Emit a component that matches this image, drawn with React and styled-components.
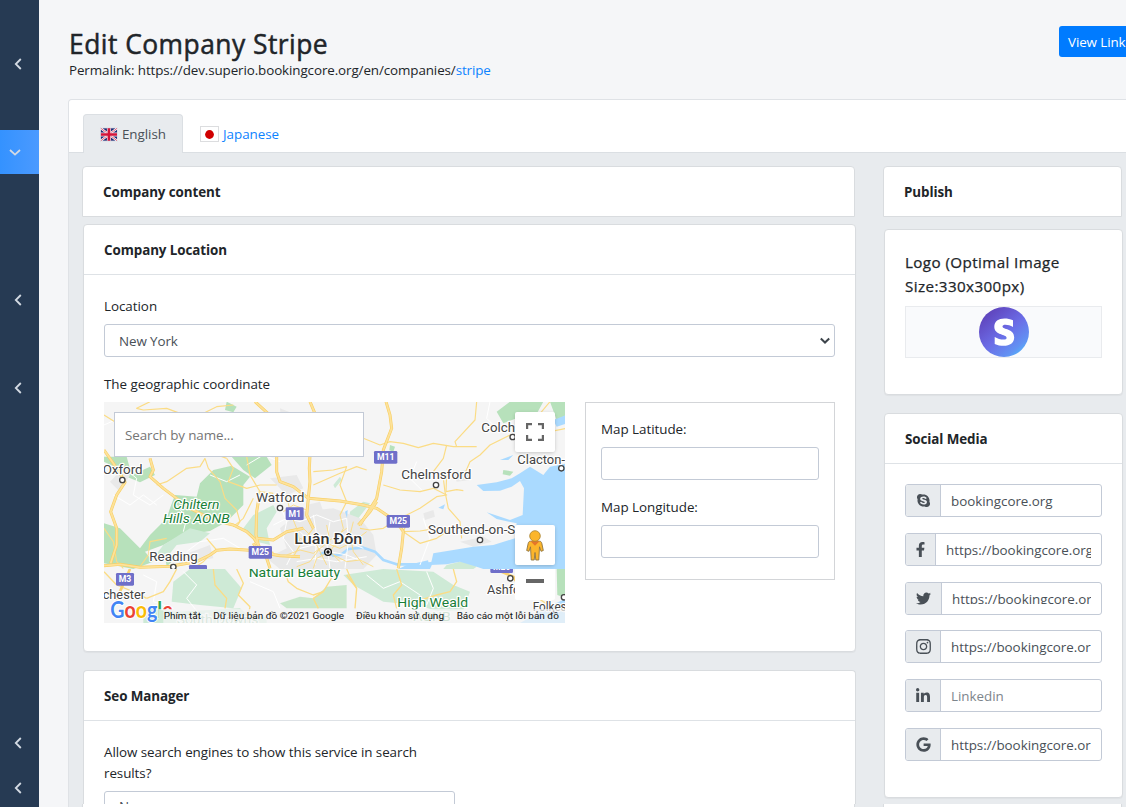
import React from "react";
import styled, { createGlobalStyle, css } from "styled-components";
import { FaSkype, FaFacebookF, FaTwitter, FaInstagram, FaLinkedinIn, FaGoogle } from "react-icons/fa";

const GlobalStyle = createGlobalStyle`
  *, *::before, *::after { box-sizing: border-box; }
  body {
    margin: 0;
    background: #f5f6f8;
    color: #212529;
    font-family: "Open Sans", "Noto Sans", sans-serif;
    font-size: 13.4px;
    line-height: 21px;
    letter-spacing: -0.1px;
    overflow: hidden;
  }
`;

const Page = styled.div`
  display: flex;
  width: 1126px;
  height: 807px;
  overflow: hidden;
`;

const Sidebar = styled.nav`
  flex: none;
  width: 39px;
  background: #263a53;
  padding-top: 42px;
`;

const SideItem = styled.div`
  height: 44px;
  margin-top: ${(p) => p.$gap}px;
  padding-left: ${(p) => (p.$active ? 9 : 14)}px;
  display: flex;
  align-items: center;
  background: ${(p) => (p.$active ? "linear-gradient(90deg, #3492ff, #4b9aff)" : "none")};
  color: #d3dae3;
`;

const Main = styled.main`
  flex: 1;
  min-width: 0;
  padding: 26px 0 0 29px;
`;

const Header = styled.header`
  display: flex;
  justify-content: space-between;
  align-items: flex-start;
  height: 73px;
  padding-left: 1px;
`;

const Title = styled.h1`
  margin: 0;
  padding-top: 1px;
  font-size: 26.4px;
  line-height: 34px;
  height: 34px;
  font-weight: 500;
  letter-spacing: 0.48px;
  -webkit-text-stroke: 0.5px currentColor;
  white-space: nowrap;
`;

const Permalink = styled.div`
  white-space: nowrap;
`;

const Link = styled.span`
  color: #0d83ff;
`;

const ViewLink = styled.div`
  flex: none;
  width: 80px;
  height: 31px;
  margin-right: -13px;
  padding: 6px 0 0 9px;
  border-radius: 3px;
  background: #007bff;
  color: #fff;
  white-space: nowrap;
`;

const Panel = styled.section`
  border: 1px solid #dfe2e6;
  border-right: 0;
  border-radius: 4px 0 0 0;
  background: #e8ebee;
  height: 760px;
`;

const Tabs = styled.div`
  display: flex;
  height: 53px;
  padding: 14px 0 0 14px;
  background: #fff;
  border-bottom: 1px solid #dbdfe3;
  border-radius: 3px 0 0 0;
`;

const Tab = styled.div`
  display: flex;
  align-items: center;
  gap: 4px;
  height: 39px;
  padding: 0 16px;
  border: 1px solid transparent;
  border-bottom: 0;
  border-radius: 4px 4px 0 0;
  color: #0d83ff;
  letter-spacing: -0.03px;
  ${(p) => p.$active && css`
    width: 100px;
    background: #e8ebee;
    border-color: #dbdfe3;
    color: #495057;
  `}
`;

const Columns = styled.div`
  display: flex;
  align-items: flex-start;
  gap: 28px;
  padding: 13px 0 0 13px;
`;

const Column = styled.div`
  flex: none;
  width: ${(p) => p.$w}px;
`;

const Card = styled.section`
  height: ${(p) => p.$h}px;
  margin: ${(p) => p.$gap || 0}px 0 0 ${(p) => (p.$shift ? 1 : 0)}px;
  width: ${(p) => p.$w}px;
  background: #fff;
  border: 1px solid #d9dcdf;
  border-radius: 4px;
  overflow: hidden;
  box-shadow: 0 1px 1px rgba(0, 0, 0, 0.04);
  ${(p) => p.$cut && css`
    border-radius: 4px 4px 0 0;
    box-shadow: none;
  `}
  ${(p) => p.$continued && css`
    border-bottom: 0;
  `}
  ${(p) => p.$open && css`
    border-top: 0;
    border-radius: 0;
  `}
`;

const CardHead = styled.div`
  height: 50px;
  padding: 15px 20px 0;
  font-weight: 700;
  letter-spacing: -0.08px;
  border-bottom: 1px solid #dee2e6;
`;

const CardBody = styled.div`
  padding: ${(p) => p.$top || 21}px 20px 0;
`;

const Label = styled.div`
  margin-bottom: 7px;
  letter-spacing: ${(p) => (p.$wrap ? -0.07 : -0.03)}px;
  white-space: ${(p) => (p.$wrap ? "normal" : "nowrap")};
`;

const Field = styled.div`
  height: 33px;
  margin-bottom: ${(p) => p.$mb || 0}px;
  width: ${(p) => (p.$w ? p.$w + "px" : "auto")};
  border: 1px solid #c3cad6;
  border-radius: 3px;
  display: flex;
  align-items: center;
  justify-content: space-between;
  padding: ${(p) => (p.$w ? "0 3px 2px 14px" : "1px 3px 0 14px")};
  color: #495057;
`;

const GeoRow = styled.div`
  display: flex;
  gap: 20px;
`;

const MapBox = styled.div`
  position: relative;
  width: 461px;
  height: 221px;
  overflow: hidden;
`;

const MapSearch = styled.div`
  position: absolute;
  left: 10px;
  top: 10px;
  width: 250px;
  height: 45px;
  padding: 12px 10px;
  background: #fff;
  border: 1px solid #c3cad6;
  color: #757575;
`;

const MapControl = styled.div`
  position: absolute;
  left: 411px;
  top: ${(p) => p.$top}px;
  width: 40px;
  height: ${(p) => p.$h}px;
  background: #fff;
  border-radius: ${(p) => (p.$flat ? "0 0 2px 2px" : "2px")};
  box-shadow: ${(p) => (p.$flat ? "none" : "0 1px 4px -1px rgba(0, 0, 0, 0.3)")};
  display: flex;
  justify-content: center;
  align-items: center;
`;

const MapSvg = styled.svg`
  display: block;
  font-family: Roboto, sans-serif;
  letter-spacing: 0;
`;

const Coords = styled.div`
  width: 250px;
  height: 178px;
  border: 1px solid #d3d5d8;
  padding: 16px 15px 0;
`;

const LogoTitle = styled.div`
  margin-top: 20px;
  padding: 0 20px;
  font-size: 15.2px;
  line-height: 24px;
  letter-spacing: 0.4px;
  -webkit-text-stroke: 0.25px currentColor;
  white-space: nowrap;
`;

const LogoBox = styled.div`
  margin: 8px 20px 0;
  height: 52px;
  border: 1px solid #e9ebee;
  background: #f9fafc;
  display: flex;
  justify-content: center;
  align-items: center;
`;

const SocialField = styled.div`
  display: flex;
  height: 33px;
  margin-bottom: ${(p) => p.$mb}px;
  border: 1px solid #c3cad6;
  border-radius: 3px;
  overflow: hidden;
`;

const SocialIcon = styled.div`
  flex: none;
  width: ${(p) => p.$w}px;
  background: #e8ebee;
  border-right: 1px solid #c3cad6;
  display: flex;
  align-items: center;
  justify-content: center;
  color: #495057;
`;

const SocialText = styled.div`
  flex: 1;
  min-width: 0;
  height: ${(p) => (p.$clip ? 21 : 31)}px;
  margin: 0 10px;
  line-height: ${(p) => (p.$clip ? 32 : 33)}px;
  letter-spacing: -0.03px;
  color: ${(p) => (p.$muted ? "#7d858c" : "#495057")};
  white-space: nowrap;
  overflow: hidden;
`;

const Chevron = ({ down }) => (
  <svg width={down ? 12 : 8} height="12" viewBox={down ? "0 0 12 12" : "0 0 8 12"} fill="none" stroke="currentColor" strokeWidth="1.8">
    <path d={down ? "M1 4l5 4.6L11 4" : "M6.8 1L1.8 6l5 5"} />
  </svg>
);

const UkFlag = () => (
  <svg width="19" height="15" viewBox="0 0 19 15">
    <rect width="19" height="15" fill="#dcdfe6" />
    <rect x="1" y="1" width="17" height="13" fill="#1c2b75" />
    <path d="M1 1l17 13M18 1L1 14" stroke="#fff" strokeWidth="2.4" />
    <path d="M1 1l17 13M18 1L1 14" stroke="#d8294a" strokeWidth=".8" />
    <path d="M9.5 1v13M1 7.5h17" stroke="#f3dfe6" strokeWidth="4.4" />
    <path d="M9.5 1v13M1 7.5h17" stroke="#d4143a" strokeWidth="2.8" />
  </svg>
);

const JpFlag = () => (
  <svg width="19" height="16" viewBox="0 0 19 16">
    <rect x=".5" y=".5" width="18" height="15" fill="#fff" stroke="#dcdddf" />
    <circle cx="9.5" cy="8.5" r="4.4" fill="#d00000" />
  </svg>
);

const Place = ({ x, y, w, size = 40, children, fill = "#444", weight = 400, italic }) => (
  <text x={x} y={y} textLength={w} lengthAdjust="spacingAndGlyphs" fontSize={size} fill={fill} fontWeight={weight}
    fontStyle={italic ? "italic" : "normal"} stroke="#fff" strokeWidth="7" strokeLinejoin="round" paintOrder="stroke">
    {children}
  </text>
);

const Shield = ({ x, y, w, children }) => (
  <g>
    <rect x={x} y={y} width={w} height="38" rx="4" fill="#6f6fc9" />
    <text x={x + w / 2} y={y + 28} textAnchor="middle" fontSize="26" fontWeight="700" fill="#fff">{children}</text>
  </g>
);

const Dot = ({ x, y }) => <circle cx={x} cy={y} r="8" fill="#fff" stroke="#444" strokeWidth="4" />;

const highways = [
  "M12 165L40 205 60 235 75 262 50 300 32 350 50 400 50 450 32 505",
  "M12 512L60 508 120 517 210 514 290 500 330 480 350 466 390 462 450 466 480 472 540 482 600 485",
  "M150 190L160 225 150 245 190 280 230 310 270 340 340 375 400 390 440 410 462 430 475 450",
  "M465 20L520 70 530 120 530 230 540 260 580 275 625 310 620 360 640 400",
  "M630 20L655 80 632 140 628 220 630 260 625 310",
  "M480 290L470 350 468 420 475 450 500 490 510 520",
  "M625 310L720 318 790 330 830 340 860 360 890 380 910 410 905 460 895 520",
  "M858 20L870 60 875 100 850 165 845 230 830 310 780 390",
  "M830 320L810 350 775 390",
  "M470 430L520 435 560 410 610 400",
  "M460 445L475 470 520 475",
];
const mainRoads = [
  "M12 60L60 90 100 110 140 130 200 145 300 160 380 190",
  "M150 20L110 40 130 45 200 40 280 70 350 35 400 30",
  "M315 190L300 215 260 220 200 260 170 270",
  "M315 190L325 220 360 260 375 310 410 345 420 380 410 395",
  "M380 190L400 220 385 260 440 280 480 270 530 270",
  "M440 185L450 240 480 290 520 295",
  "M320 430L350 465 330 480 310 500 280 520",
  "M400 395L430 370 460 310",
  "M640 230L700 225 740 215 720 270 740 320 720 360",
  "M640 270L720 235 770 215 800 225",
  "M12 400L40 440 50 500 70 520",
  "M120 515L145 480 150 440 200 430",
  "M790 130L840 150 870 140 910 145 955 158 1000 145 1060 155 1130 155",
  "M1130 20L1125 75 1065 140 1070 155",
  "M1400 100L1350 110 1310 130 1230 120 1170 150 1140 180 1110 200 1095 235",
  "M1040 150L1030 190 1000 230 1030 250 1035 290 1045 340 1080 380 1085 430",
  "M850 270L900 285 960 290 1000 280 1040 300 1010 305 960 340 920 360 890 370",
  "M1040 240L1038 290 1070 284 1090 287",
  "M910 410L960 408 1010 400 1060 400",
  "M910 410L960 445 1010 430 1070 390",
  "M780 400L810 405 850 400 880 380 920 385 910 410",
  "M640 400L600 450 580 485",
  "M1250 100L1300 80 1350 20",
];
const southRoads = [
  "M90 522L75 560 55 605 40 635",
  "M12 530L50 570 100 590 140 610",
  "M230 522L210 560 190 590 140 610",
  "M340 522L345 570 380 610 375 640",
  "M410 522L430 565 415 600 450 635 440 680",
  "M550 522L565 560 590 580 640 600 670 590",
  "M700 540L670 590 640 610 655 640",
  "M740 540L770 580 765 640",
  "M740 522L750 545 770 580",
  "M1060 522L1070 560 1050 590 1010 600 930 625",
  "M890 522L905 570 880 600 890 640",
  "M1200 522L1230 540 1250 560 1300 600 1360 640",
];
const northLocal = [
  "M12 90L80 60 120 90 150 60 220 90", "M40 300L90 330 130 300 170 330", "M60 210L110 250 100 300 150 330 190 300",
  "M440 210L490 180 540 200", "M330 240L380 260 420 240", "M230 330L260 370 250 410", "M260 470L300 440 370 430 420 460",
  "M520 390L560 370 600 380 650 360 700 380 740 370", "M540 330L560 380 550 430 580 470 560 510",
  "M600 410L620 430 650 420 690 450 740 440 790 460", "M600 460L640 450 690 470 740 480 790 500",
  "M640 360L650 420 645 510", "M690 380L680 440 690 520", "M740 370L745 440 735 520", "M590 500L650 490 710 500 800 485",
  "M950 200L930 250 970 290", "M970 370L990 430 960 510", "M1170 20L1160 70 1200 110",
];
const southLocal = [
  "M130 540L170 560 160 620 220 640", "M250 530L290 570 260 610 300 660", "M450 560L520 590 540 640",
  "M800 540L850 580 900 560 960 600", "M980 530L1000 580 980 630",
];

const Paths = ({ list }) => list.map((d) => <path key={d} d={d} />);

const MapDrawing = () => (
  <MapSvg width="461" height="221" viewBox="0 0 461 221">
    <defs>
      <clipPath id="north"><rect x="0" y="0" width="1410" height="522" /></clipPath>
      <clipPath id="south"><rect x="0" y="522" width="1410" height="170" /></clipPath>
      <clipPath id="wordmark"><path d="M0 590H175V700H0zM175 590H240V643H175z" /></clipPath>
    </defs>
    <rect width="461" height="221" fill="#f5f5f5" />
    <g transform="translate(-4 -7) scale(.33333)" fill="none" strokeLinejoin="round">
      <g clipPath="url(#north)">
        <g fill="#b7e1bb">
          <path d="M395 185H500L515 210 465 250 430 225z" />
          <path d="M300 265L340 225 395 212 450 245 430 270 430 330 380 380 330 408 240 422 190 450 135 470 160 500 100 522 12 505V385L60 400 120 460 150 420 200 370 210 340 225 300 290 305z" />
          <path d="M12 185H80L95 240 150 215 165 240 120 262 80 245 60 225 12 200z" />
          <path d="M380 20L410 35 400 52 375 45zM195 480l25 15-20 20z" />
          <path d="M1190 50L1230 20H1330L1300 75 1250 70 1210 85zM1350 20H1400V60L1370 75z" />
          <path d="M1210 225L1240 230 1230 242 1208 238zM870 150l15 5-5 15-12-4z" />
        </g>
        <g fill="#ceead6">
          <path d="M460 360L520 330 530 350 500 400 510 450 470 440 430 400z" />
          <path d="M750 350L790 320 810 325 775 370 745 385zM700 270L720 245 725 255 705 280z" />
          <path d="M270 400L330 415 300 440 230 450 190 500 160 490 190 450z" />
          <path d="M1040 510L1100 495 1130 515 1120 522H1030z" />
        </g>
        <g fill="#e9e9e9">
          <path d="M540 400L600 350 700 340 780 370 820 420 830 480 790 522H540L500 490 560 460z" />
          <path d="M510 250L590 240 610 280 560 300zM620 330L660 320 670 350 630 360zM250 480L330 450 340 490 270 500zM30 260L70 220 90 240 60 290z" />
          <path d="M1060 230L1100 225 1110 255 1070 260zM970 355L1000 345 1005 365 975 375zM1080 440L1150 425 1175 440 1120 455zM540 40L590 60 570 120 545 110z" />
        </g>
        <g fill="#aadaff">
          <path d="M1400 205L1350 215 1330 240 1290 215 1260 235 1235 250 1190 262 1130 270 1150 288 1200 287 1235 275 1260 258 1272 280 1268 360 1230 375 1160 352 1190 372 1250 385 1245 430 1180 450 1120 455 1060 465 1000 475 992 510 1040 508 1080 500 1130 515 1150 522H1400z" />
          <path d="M1200 195L1240 180 1225 195zM1360 75L1400 60V85L1370 95zM1015 338l20-10-5 15zM735 350l8-5-2 25zM230 500l22-12-5 15z" />
          <path d="M895 522L925 508 1000 500 990 522z" />
        </g>
        <path d="M660 478L685 468 700 482 725 478 745 462 790 458 825 470 850 495 890 508 950 508 985 500" stroke="#aadaff" strokeWidth="8" />
        <g stroke="#fff" strokeWidth="3"><Paths list={northLocal} /></g>
        <g stroke="#fbdc85" strokeWidth="3.5"><Paths list={mainRoads} /></g>
        <g stroke="#f8ce62" strokeWidth="9"><Paths list={highways} /></g>
        <g stroke="#fde29a" strokeWidth="5.5"><Paths list={highways} /></g>
        <g stroke="#fbdc85" strokeWidth="2.8">
          <path d="M560 480L600 465 640 475 680 445 720 460 760 440 800 410M610 400L640 430 660 470 680 510M720 360L730 400 710 440 690 470 720 500M600 430L650 450 700 430 740 400M640 520L650 490 690 470" />
          <path d="M550 350L580 330 620 345 M560 300L570 350 590 400 600 440M680 390L690 440M660 460L630 500 590 515M700 480L740 500 780 495 820 515M760 380L750 420 760 470 790 510M700 455L740 430 780 440" />
        </g>
      </g>
      <g clipPath="url(#south)">
        <g fill="#ceead6">
          <path d="M270 522H375L425 580 400 640 300 630 215 620 220 560z" />
          <path d="M730 540L850 522 1000 530 1060 570 1110 590 1090 645 1020 650 950 630 850 620 760 570z" />
          <path d="M130 640L230 650 420 640 480 690H130zM250 650L500 665V690H250z" />
        </g>
        <g fill="#b7e1bb">
          <path d="M1370 522H1400V610L1372 600z" />
          <path d="M540 625L600 605 640 610 680 575 740 570 740 640H560z" opacity=".7" />
        </g>
        <path d="M1300 662L1345 635 1400 610V700H1230z" fill="#aadaff" />
        <g stroke="#fff" strokeWidth="3"><Paths list={southLocal} /></g>
        <g stroke="#fbdc85" strokeWidth="4"><Paths list={southRoads} /></g>
        <g stroke="#f9d272" strokeWidth="8"><path d="M1185 522L1240 545 1255 570M90 522L55 600" /></g>
      </g>

      <g clipPath="url(#north)">
        <Place x={8} y={236} w={120}>Oxford</Place><Dot x={67} y={255} />
        <Place x={220} y={342} w={138} fill="#188038" italic>Chiltern</Place>
        <Place x={189} y={384} w={200} fill="#188038" italic>Hills AONB</Place>
        <Place x={468} y={320} w={145}>Watford</Place><Dot x={540} y={339} />
        <Place x={148} y={498} w={145}>Reading</Place><Dot x={220} y={516} />
        <Place x={583} y={446} w={204} size={44} weight={500} fill="#333">Luân Đôn</Place>
        <circle cx="684" cy="471" r="10" fill="#fff" stroke="#111" strokeWidth="4" />
        <circle cx="684" cy="471" r="5" fill="#111" />
        <Place x={904} y={251} w={210}>Chelmsford</Place><Dot x={1008} y={270} />
        <Place x={984} y={417} w={262}>Southend-on-S</Place><Dot x={1140} y={435} />
        <Place x={1144} y={111} w={101}>Colch</Place><Dot x={1238} y={126} />
        <Place x={1252} y={206} w={143}>Clacton-</Place><Dot x={1384} y={220} />
        <Shield x={557} y={337} w={54}>M1</Shield>
        <Shield x={446} y={453} w={70}>M25</Shield>
        <Shield x={822} y={168} w={70}>M11</Shield>
        <Shield x={860} y={360} w={70}>M25</Shield>
        <Shield x={267} y={510} w={54} />
      </g>
      <g clipPath="url(#south)">
        <Place x={446} y={546} w={274} fill="#188038">Natural Beauty</Place>
        <Shield x={1171} y={496} w={68}>M20</Shield>
        <Shield x={48} y={534} w={54}>M3</Shield>
        <Place x={8} y={611} w={127}>chester</Place>
        <Dot x={1231} y={550} />
        <Place x={1161} y={596} w={100}>Ashfo</Place>
        <Place x={892} y={637} w={212} fill="#188038">High Weald</Place>
        <Place x={940} y={678} w={112} fill="#6fb07f">AONB</Place>
        <Place x={230} y={686} w={245} fill="#8fc09c">South Downs</Place>
        <Place x={1298} y={648} w={102}>Folkes</Place><Dot x={1392} y={607} />
      </g>

      <path d="M190 642H1407V688H190z" fill="#f5f5f5" fillOpacity=".72" />
      <g clipPath="url(#wordmark)" fontFamily="Lato, sans-serif" fontWeight="700">
        <text x="31" y="670" fontSize="69" textLength="187" lengthAdjust="spacingAndGlyphs" stroke="#fff" strokeWidth="6" paintOrder="stroke">
          <tspan fill="#4285f4">G</tspan><tspan fill="#ea4335">o</tspan><tspan fill="#fbbc05">o</tspan><tspan fill="#4285f4">g</tspan><tspan fill="#34a853">l</tspan><tspan fill="#ea4335">e</tspan>
        </text>
      </g>
      <g fill="#111" fontSize="29">
        <text x="191" y="672" textLength="112" lengthAdjust="spacingAndGlyphs">Phím tắt</text>
        <text x="340" y="672" textLength="392" lengthAdjust="spacingAndGlyphs">Dữ liệu bản đồ ©2021 Google</text>
        <text x="768" y="672" textLength="264" lengthAdjust="spacingAndGlyphs">Điều khoản sử dụng</text>
        <text x="1070" y="672" textLength="307" lengthAdjust="spacingAndGlyphs">Báo cáo một lỗi bản đồ</text>
      </g>
    </g>
  </MapSvg>
);

const FullscreenIcon = () => (
  <svg width="18" height="18" viewBox="0 0 18 18" fill="none" stroke="#666" strokeWidth="2.2">
    <path d="M1.1 6V1.1H6M12 1.1h4.9V6M16.9 12v4.9H12M6 16.9H1.1V12" />
  </svg>
);

const Pegman = () => (
  <svg width="18" height="31" viewBox="0 0 18 31">
    <path d="M4.5 11.2h9c1.3 0 2 .8 2.3 2.1l1.5 7.2-2.3.8-1.5-4.5-.7 13.2H9.8L9 22.5l-.8 7.5H5.2L4.5 16.8 3 21.3l-2.3-.8 1.5-7.2c.3-1.3 1-2.1 2.3-2.1z" fill="#fbb52b" stroke="#8f7440" strokeWidth=".9" />
    <path d="M4.5 11.2h9L9 15.8z" fill="#e5762a" />
    <circle cx="9" cy="6" r="5.3" fill="#fbb52b" stroke="#a8822f" strokeWidth=".8" />
  </svg>
);

const StripeLogo = () => (
  <svg width="50" height="50" viewBox="0 0 50 50">
    <defs>
      <linearGradient id="stripeFill" x1=".15" y1=".1" x2=".85" y2=".95">
        <stop offset="0" stopColor="#5f43bb" />
        <stop offset=".5" stopColor="#6b6ce6" />
        <stop offset=".85" stopColor="#6292f3" />
        <stop offset="1" stopColor="#52b6fa" />
      </linearGradient>
    </defs>
    <circle cx="25" cy="25" r="25" fill="url(#stripeFill)" />
    <path d="M34 13.2V20C31.5 18.6 28.8 17.8 26.5 17.8 24.7 17.8 23.5 18.3 23.5 19.5 23.5 22.8 35.2 21.3 35.2 30.2 35.2 35.8 30.9 38.8 24.7 38.8 21.6 38.8 18.3 38.2 15.7 36.9V29.9C18.3 31.5 21.7 32.6 24.5 32.6 26.4 32.6 27.6 32.1 27.6 30.7 27.6 27.1 15.3 28.5 15.3 19.8 15.3 14.4 19.4 11.5 25.5 11.5 28.5 11.5 31.3 12 34 13.2z" fill="#fff" />
  </svg>
);

const sideItems = [
  { gap: 0 }, { gap: 44, active: true }, { gap: 104 }, { gap: 44 }, { gap: 311 }, { gap: 1 },
];

const socials = [
  { Icon: FaSkype, size: 15, w: 35, text: "bookingcore.org", mb: 16 },
  { Icon: FaFacebookF, size: 15, w: 30, text: "https://bookingcore.org", mb: 16 },
  { Icon: FaTwitter, size: 15, w: 36, text: "https://bookingcore.or", mb: 15, clip: true },
  { Icon: FaInstagram, size: 17, w: 35, text: "https://bookingcore.or", mb: 16 },
  { Icon: FaLinkedinIn, size: 16, w: 35, text: "Linkedin", mb: 16, muted: true },
  { Icon: FaGoogle, size: 15, w: 35, text: "https://bookingcore.or", mb: 0 },
];

export default function App() {
  return (
    <Page>
      <GlobalStyle />
      <Sidebar>
        {sideItems.map((s, i) => (
          <SideItem key={i} $gap={s.gap} $active={s.active}><Chevron down={s.active} /></SideItem>
        ))}
      </Sidebar>
      <Main>
        <Header>
          <div>
            <Title>Edit Company Stripe</Title>
            <Permalink>Permalink: https://dev.superio.bookingcore.org/en/companies/<Link>stripe</Link></Permalink>
          </div>
          <ViewLink>View Link</ViewLink>
        </Header>
        <Panel>
          <Tabs>
            <Tab $active><UkFlag />English</Tab>
            <Tab><JpFlag />Japanese</Tab>
          </Tabs>
          <Columns>
            <Column $w={773}>
              <Card $h={51} $w={773} $cut><CardHead>Company content</CardHead></Card>
              <Card $h={428} $w={773} $gap={7} $shift>
                <CardHead>Company Location</CardHead>
                <CardBody>
                  <Label>Location</Label>
                  <Field $mb={17}>
                    New York
                    <svg width="12" height="12" viewBox="0 0 12 12" fill="none" stroke="#3d444b" strokeWidth="2"><path d="M1.8 3.5L6 7.5l4.2-4" /></svg>
                  </Field>
                  <Label>The geographic coordinate</Label>
                  <GeoRow>
                    <MapBox>
                      <MapDrawing />
                      <MapSearch>Search by name...</MapSearch>
                      <MapControl $top={10} $h={40}><FullscreenIcon /></MapControl>
                      <MapControl $top={123} $h={40}><Pegman /></MapControl>
                      <MapControl $top={167} $h={31} $flat>
                        <svg width="18" height="12" viewBox="0 0 18 12"><rect width="18" height="4" fill="#666" /></svg>
                      </MapControl>
                    </MapBox>
                    <Coords>
                      <Label>Map Latitude:</Label>
                      <Field $mb={17} />
                      <Label>Map Longitude:</Label>
                      <Field />
                    </Coords>
                  </GeoRow>
                </CardBody>
              </Card>
              <Card $h={134} $w={773} $gap={18} $shift $cut $continued>
                <CardHead>Seo Manager</CardHead>
                <CardBody>
                  <Label $wrap>Allow search engines to show this service in search<br />results?</Label>
                  <Field $w={351}>No</Field>
                </CardBody>
              </Card>
              <Card $h={40} $w={773} $open />
            </Column>
            <Column $w={240}>
              <Card $h={51} $w={239} $cut><CardHead>Publish</CardHead></Card>
              <Card $h={166} $w={239} $gap={12} $shift>
                <LogoTitle>Logo (Optimal Image<br />Size:330x300px)</LogoTitle>
                <LogoBox><StripeLogo /></LogoBox>
              </Card>
              <Card $h={385} $w={239} $gap={18} $shift>
                <CardHead>Social Media</CardHead>
                <CardBody $top={20}>
                  {socials.map(({ Icon, size, w, text, mb, clip, muted }, i) => (
                    <SocialField key={i} $mb={mb}>
                      <SocialIcon $w={w}><Icon size={size} /></SocialIcon>
                      <SocialText $clip={clip} $muted={muted}>{text}</SocialText>
                    </SocialField>
                  ))}
                </CardBody>
              </Card>
              <Card $h={40} $w={239} $gap={6} $open />
            </Column>
          </Columns>
        </Panel>
      </Main>
    </Page>
  );
}
